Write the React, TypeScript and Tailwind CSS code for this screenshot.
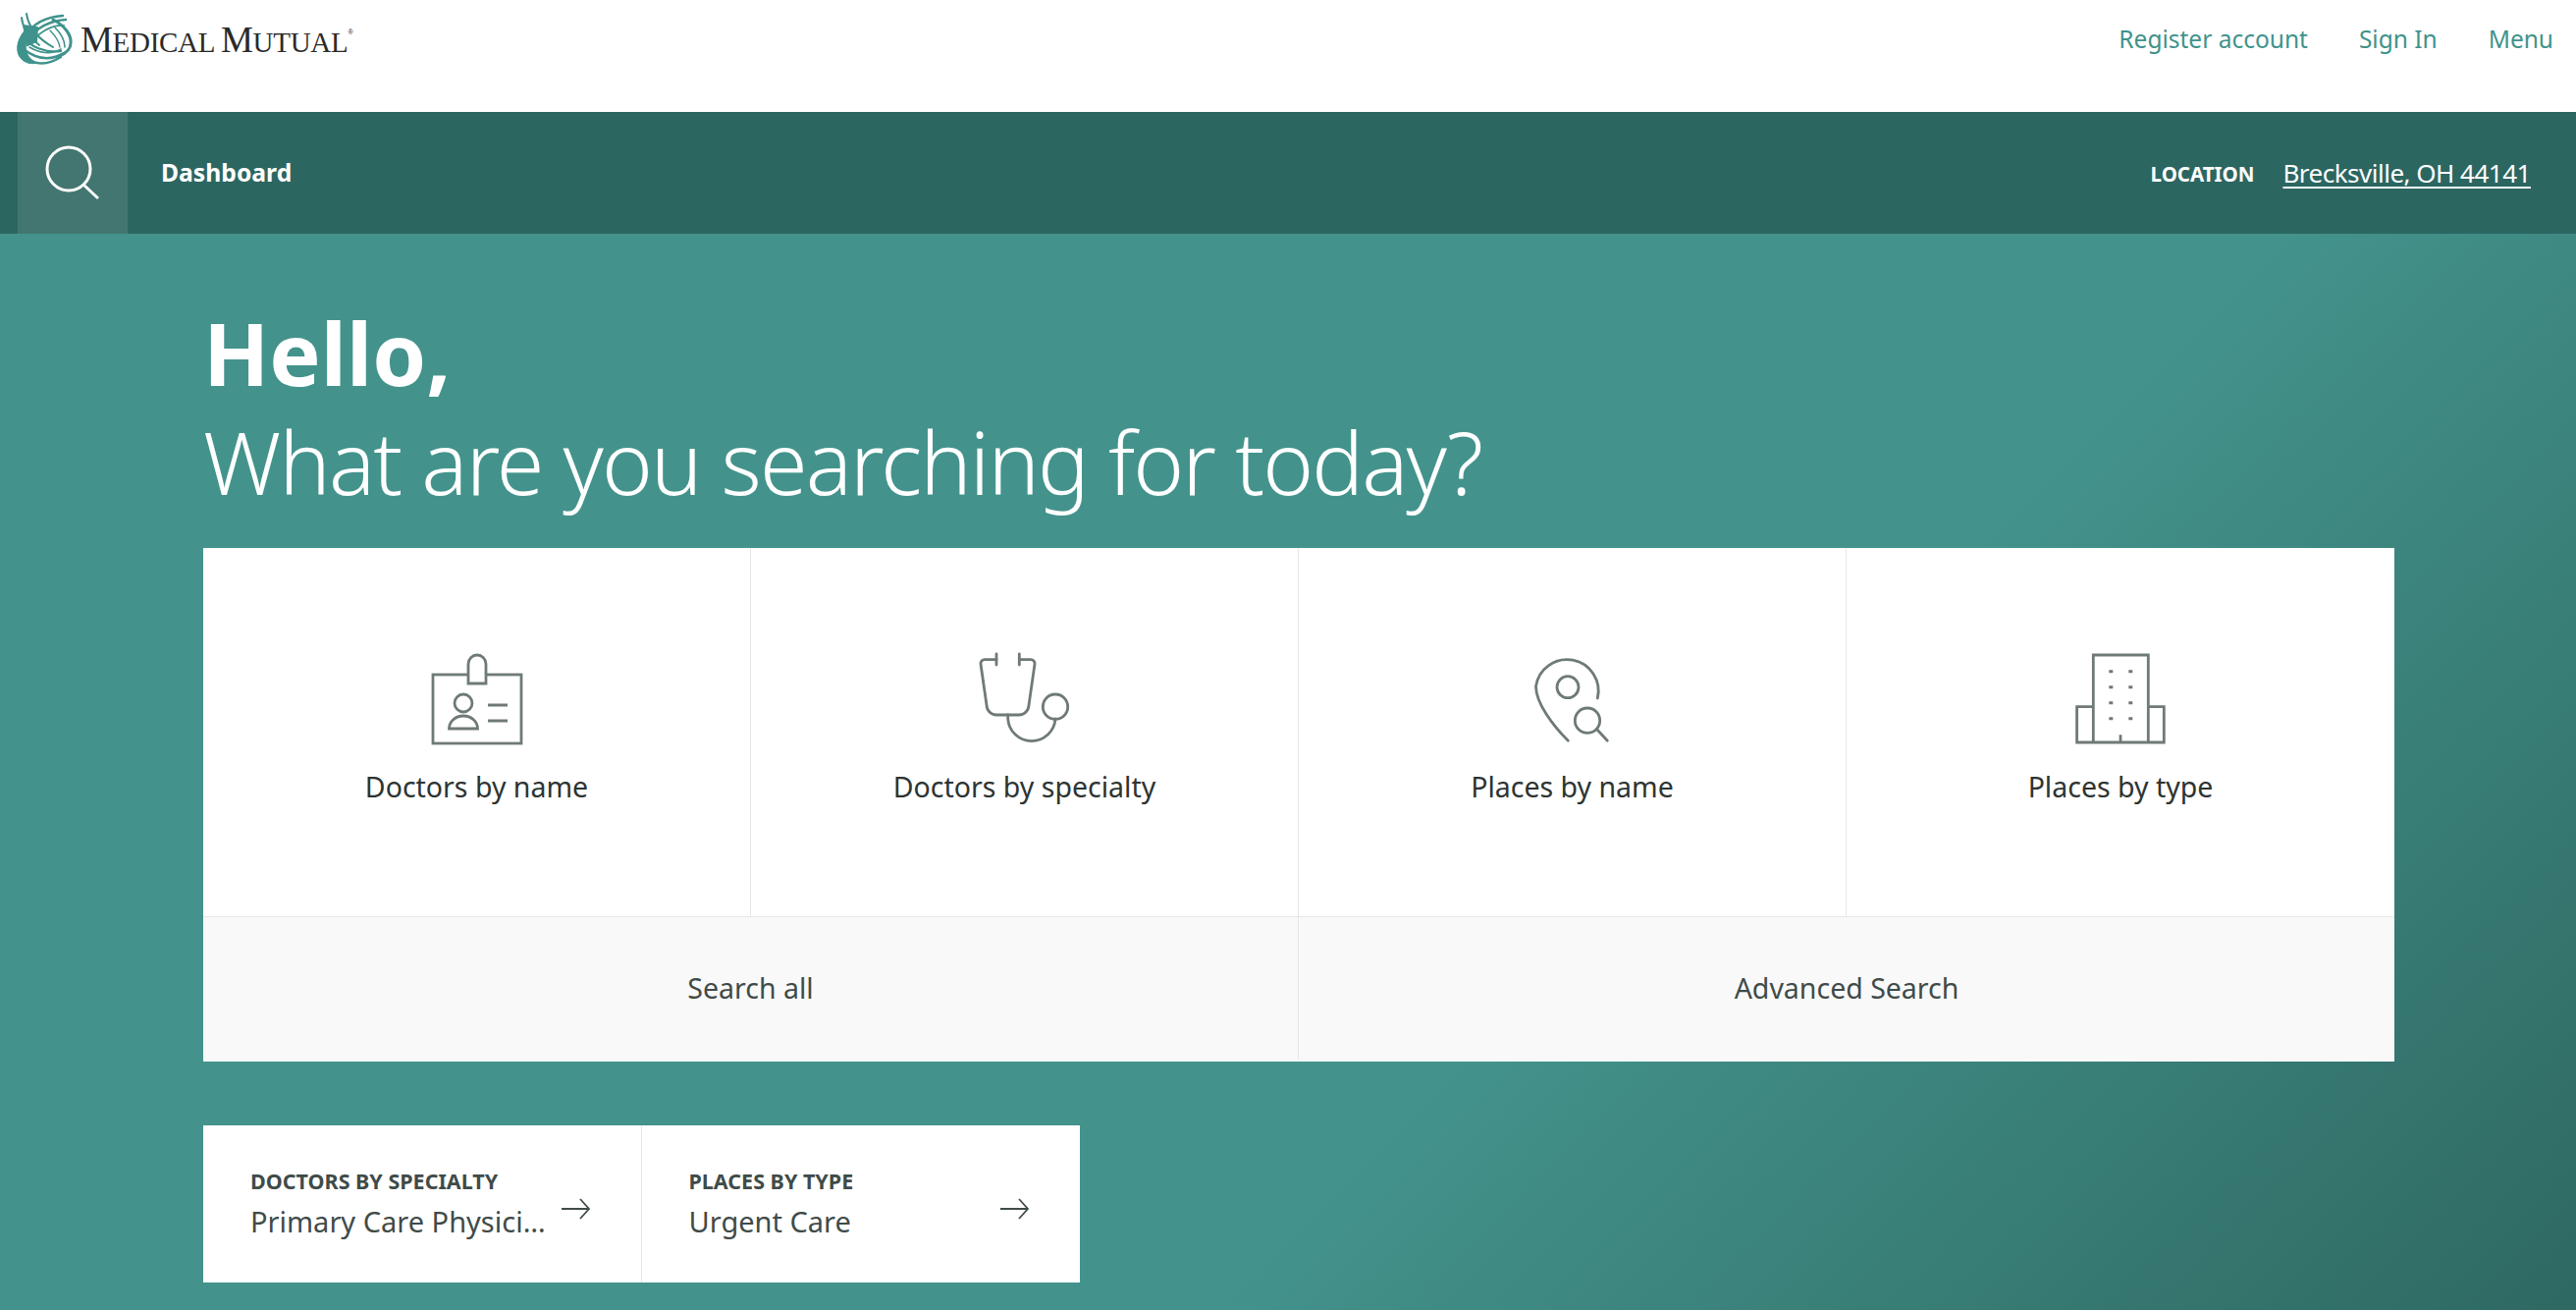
const iconClass = "h-[100px] w-[100px] fill-none stroke-[#6f7a78] stroke-[2.8]";

function IdBadgeIcon() {
  return (
    <svg viewBox="0 0 100 100" className={iconClass}>
      <rect x="5" y="26" width="90" height="70" />
      <path d="M41 35V15a9 9 0 0 1 18 0v20z" className="fill-white" />
      <circle cx="36" cy="55" r="9" />
      <path d="M21.5 81a14.5 13 0 0 1 29 0z" />
      <path d="M61 57h20M61 73h20" />
    </svg>
  );
}

function StethoscopeIcon() {
  return (
    <svg viewBox="0 0 100 100" className={iconClass} strokeLinecap="round">
      <path d="M21 10.7H9a4 4 0 0 0-4 4.5L11 57a10 10 0 0 0 10 10h23a10 10 0 0 0 10-10l6-41.8a4 4 0 0 0-4-4.5H44.3" />
      <path d="M21 5v11M44.3 5v11" />
      <path d="M32.7 67v4a24.2 24.2 0 0 0 48.3 0" />
      <circle cx="81" cy="58.7" r="12.7" />
    </svg>
  );
}

function PinSearchIcon() {
  return (
    <svg viewBox="0 0 100 100" className={iconClass} strokeLinecap="round">
      <path d="M75.3 50A32 32 0 1 0 12.5 38C12.5 55 30 78 45.3 93.3" />
      <circle cx="45" cy="38.7" r="11" />
      <circle cx="65" cy="72.7" r="12.7" />
      <path d="M74.7 81.7l10.6 11.6" />
    </svg>
  );
}

function BuildingIcon() {
  return (
    <svg viewBox="0 0 100 100" className={iconClass}>
      <path d="M22.3 95V6h56v89M22.3 58.7H5.6V95h88.7V58.7H78.3M50 87.3V95" />
      <path
        d="M38.3 22.7h4M58.3 22.7h4M38.3 38.7h4M58.3 38.7h4M38.3 54.7h4M58.3 54.7h4M38.3 70.7h4M58.3 70.7h4"
        className="stroke-[3]"
      />
    </svg>
  );
}

function Arrow() {
  return (
    <svg viewBox="0 0 32 24" className="mt-[10px] h-6 w-8 shrink-0 fill-none stroke-[#3f4b49] stroke-[1.8]">
      <path d="M1 12h28M20 2l9 10-9 10" />
    </svg>
  );
}

function Logo() {
  return (
    <svg viewBox="0 0 72 66" className="h-[66px] w-[72px] shrink-0 fill-none stroke-[#3f938c]" strokeLinecap="round">
      <path d="M18 22C8 32 6 42 9 50c4 8 13 10 18 8-8-4-13-12-10-22z" className="fill-[#3f938c]" strokeWidth="1" />
      <path d="M14 20l14 2-1 14-9 4z" className="fill-[#3f938c]" strokeWidth="2" />
      <path d="M16 30C24 18 38 11 54 10" strokeWidth="2.4" />
      <path d="M18 34C28 22 40 15 57 14" strokeWidth="2.4" />
      <path d="M22 36c10-10 22-17 33-16" strokeWidth="1.8" />
      <path d="M12 12c1 10 8 20 18 28" strokeWidth="2" />
      <path d="M17 8c2 14 13 26 27 34" strokeWidth="2" />
      <path d="M13 30c7 12 23 18 39 16" strokeWidth="2.4" />
      <path d="M44 14c12 6 19 16 18 24 0 6-4 10-12 13" strokeWidth="3" />
      <path d="M46 22c6 6 10 12 10 20" strokeWidth="1.6" />
      <path d="M41 25c5 5 9 11 10 17" strokeWidth="1.4" />
      <path d="M14 44c10 8 24 14 42 4" strokeWidth="2.6" />
      <path d="M20 42c10 6 22 8 32 2" strokeWidth="1.6" />
      <path d="M13 50c11 10 23 12 39 2" strokeWidth="2.6" />
    </svg>
  );
}

const searchTiles = [
  { label: "Doctors by name", icon: <IdBadgeIcon /> },
  { label: "Doctors by specialty", icon: <StethoscopeIcon /> },
  { label: "Places by name", icon: <PinSearchIcon /> },
  { label: "Places by type", icon: <BuildingIcon /> },
];

const recent = [
  { title: "DOCTORS BY SPECIALTY", value: "Primary Care Physician" },
  { title: "PLACES BY TYPE", value: "Urgent Care" },
];

export default function App() {
  return (
    <div className="h-[1334px] w-[2624px] overflow-hidden bg-white font-['Noto_Sans',sans-serif]">
      <header className="flex h-[114px] items-start justify-between pl-[10px] pr-[23px]">
        <div className="flex items-start pt-[6px]">
          <Logo />
          <span className="pt-[15px] font-['Liberation_Serif',serif] text-[29px] leading-[40px] tracking-[-0.3px] text-[#2b2a29]">
            <span className="text-[37px]">M</span>EDICAL <span className="text-[37px]">M</span>UTUAL
          </span>
          <span className="pt-[23px] font-['Liberation_Sans',sans-serif] text-[7px] leading-none text-[#2b2a29]">®</span>
        </div>
        <nav className="flex gap-[52px] pt-[20px] text-[24.5px] leading-[40px] text-[#3f938c]">
          <a>Register account</a>
          <a>Sign In</a>
          <a>Menu</a>
        </nav>
      </header>

      <div className="flex h-[124px] items-center justify-between bg-[#2c6661] pl-[18px] pr-[46px]">
        <div className="flex h-full items-center">
          <button className="flex h-full w-[112px] items-center justify-center bg-[#437671]">
            <svg viewBox="0 0 56 56" className="h-14 w-14 -translate-x-[1px] fill-none stroke-white stroke-[3]">
              <circle cx="25" cy="24" r="22" />
              <path d="M40 40l15 14" />
            </svg>
          </button>
          <span className="ml-[34px] text-[24.7px] font-bold text-white">Dashboard</span>
        </div>
        <div className="flex items-center text-white">
          <span className="mt-[2px] text-[20.5px] font-bold">LOCATION</span>
          <a className="ml-[29px] text-[26px] tracking-[-0.5px] underline underline-offset-4">Brecksville, OH 44141</a>
        </div>
      </div>

      <main className="h-[1096px] bg-[linear-gradient(135deg,#43938c_0%,#43938c_62%,#2e6962_100%)] px-[207px] pt-[71px]">
        <h1 className="text-[88px] font-bold leading-[100px] text-white">Hello,</h1>
        <p className="mt-[5px] text-[88px] font-light leading-[112px] tracking-[-1.85px] text-white">
          What are you searching for today?
        </p>

        <section className="mt-[32px] w-[2232px]">
          <div className="grid h-[375px] grid-cols-4 divide-x divide-[#e6e8e8] bg-white">
            {searchTiles.map((tile) => (
              <a key={tile.label} className="flex flex-col items-center pt-[103px]">
                {tile.icon}
                <span className="mt-[19px] text-[28.5px] leading-[42px] text-[#2d3432]">{tile.label}</span>
              </a>
            ))}
          </div>
          <div className="grid h-[148px] grid-cols-2 divide-x divide-[#e6e8e8] border-t border-[#e6e8e8] bg-[#f9f9f9] pb-[2px] text-[28.5px] text-[#3f4b49]">
            <a className="flex items-center justify-center">Search all</a>
            <a className="flex items-center justify-center">Advanced Search</a>
          </div>
        </section>

        <section className="mt-[65px] flex h-[160px] w-[893px] divide-x divide-[#e6e8e8] bg-white">
          {recent.map((item) => (
            <a key={item.title} className="flex w-1/2 items-center justify-between pl-[48px] pr-[50px]">
              <div className="min-w-0">
                <div className="text-[21.5px] font-bold leading-[30px] text-[#3f4b49]">{item.title}</div>
                <div className="mt-[6px] w-[306px] truncate text-[29px] leading-[40px] text-[#3f4b49]">{item.value}</div>
              </div>
              <Arrow />
            </a>
          ))}
        </section>
      </main>
    </div>
  );
}
